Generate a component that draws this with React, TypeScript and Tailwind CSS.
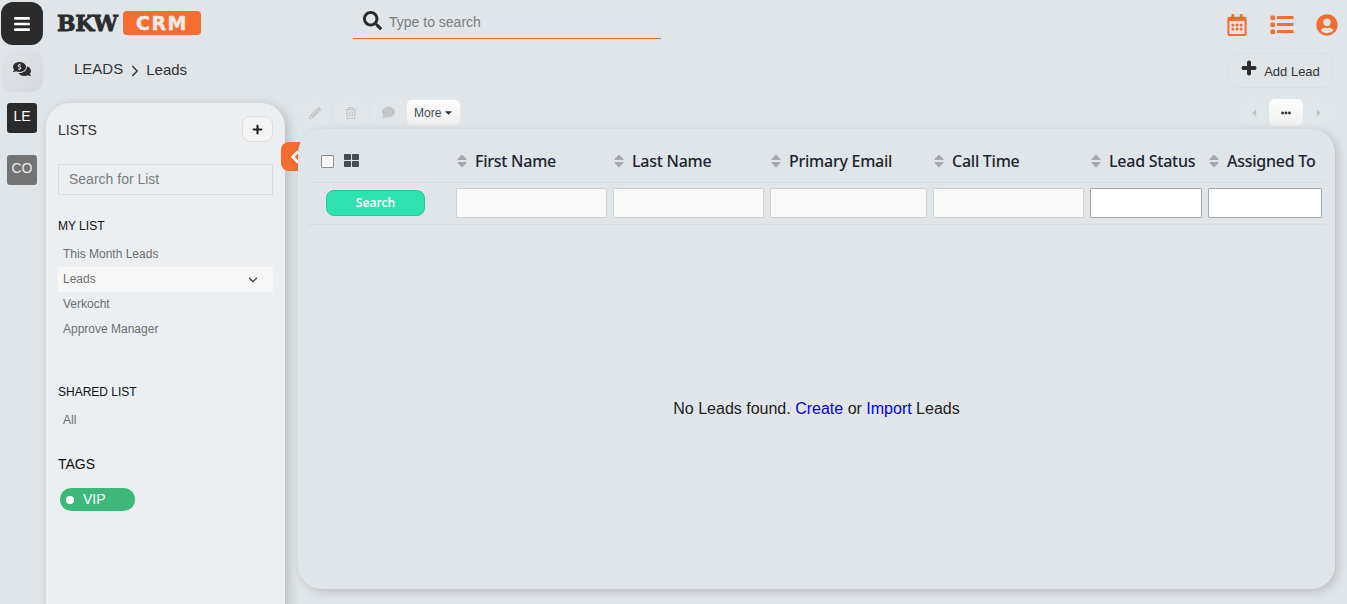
import { FaBars, FaCommentsDollar, FaSearch, FaRegCalendarAlt, FaUserCircle, FaPlus, FaPencilAlt, FaRegTrashAlt, FaComment, FaCaretDown, FaCaretLeft, FaCaretRight, FaEllipsisH, FaThLarge, FaSort, FaChevronLeft } from "react-icons/fa";
import { ChevronDown, ChevronRight } from "lucide-react";

const columns = [
  { label: "First Name", w: "w-[157px]", pad: "pr-[6px]", white: false },
  { label: "Last Name", w: "w-[157px]", pad: "pr-[6px]", white: false },
  { label: "Primary Email", w: "w-[163px]", pad: "pr-[6px]", white: false },
  { label: "Call Time", w: "w-[157px]", pad: "pr-[6px]", white: false },
  { label: "Lead Status", w: "w-[118px]", pad: "pr-[6px]", white: true },
  { label: "Assigned To", w: "w-[117px]", pad: "pr-[3px]", white: true },
];

function ListIcon() {
  return (
    <svg width="24" height="20" viewBox="0 0 24 20" fill="currentColor">
      <rect x="0.5" y="0.5" width="4.5" height="4.5" rx="1" />
      <rect x="0.5" y="7.5" width="4.5" height="4.5" rx="1" />
      <rect x="0.5" y="14.5" width="4.5" height="4.5" rx="1" />
      <rect x="7" y="1" width="16.5" height="3" rx="0.5" />
      <rect x="7" y="8" width="16.5" height="3" rx="0.5" />
      <rect x="7" y="15" width="16.5" height="3" rx="0.5" />
    </svg>
  );
}

function Rail() {
  return (
    <div className="w-[46px] shrink-0 flex flex-col items-center pt-[2px] pr-[2px]">
      <div className="w-[42px] h-[43px] rounded-[12px] bg-[#2b2b2b] flex items-center justify-center text-white text-[18px]"><FaBars /></div>
      <div className="mt-[4px] w-[42px] h-[43px] rounded-[12px] bg-gradient-to-br from-[#e0e4e8] to-[#d5d9dd] flex items-center justify-center text-[#2b2b2b] text-[18px] pb-[3px]"><FaCommentsDollar /></div>
      <div className="mt-[11px] w-[30px] h-[30px] rounded-[3px] bg-[#2b2b2b] text-white text-[14px] flex items-center justify-center pb-[4px]">LE</div>
      <div className="mt-[22px] w-[30px] h-[30px] rounded-[3px] bg-[#737373] text-[#eeeeee] text-[14px] flex items-center justify-center pb-[4px]">CO</div>
    </div>
  );
}

function Header() {
  return (
    <div className="h-[50px] flex items-start shrink-0">
      <div className="w-[307px] pl-[11px] pt-[11px] flex items-center">
        <span className="text-[#2b2b2b] text-[22px] leading-[24px] font-black tracking-[-0.4px] [-webkit-text-stroke:0.8px_#2b2b2b] [font-family:'DejaVu_Serif',serif] w-[62px]">BKW</span>
        <span className="ml-[4px] w-[78px] h-[24px] rounded-[4px] bg-[#f76c2f] text-[#f0e9e4] text-[19px] leading-[24px] font-bold text-center tracking-[1.5px] [-webkit-text-stroke:0.5px_#f0e9e4] [font-family:'DejaVu_Sans',sans-serif]">CRM</span>
      </div>
      <div className="w-[308px] h-[39px] border-b border-[#f76c2f] flex items-center pl-[10px] pt-[5px]">
        <FaSearch className="text-[#2b2b2b] text-[19px] -mt-[2px]" />
        <span className="ml-[7px] mt-[2px] text-[14px] text-[#7d7d7d]">Type to search</span>
      </div>
      <div className="ml-auto flex items-center gap-[22px] pr-[9px] pt-[14px] text-[#f76c2f]">
        <FaRegCalendarAlt className="text-[22px] -mt-[1px]" />
        <ListIcon />
        <FaUserCircle className="text-[22px]" />
      </div>
    </div>
  );
}

function Sidebar() {
  const item = "h-[25px] pl-[5px] pb-[2px] flex items-center text-[12px] text-[#6e6e6e]";
  return (
    <div className="w-[239px] shrink-0 self-stretch rounded-t-[24px] bg-[#ebeff2] shadow-[3px_3px_12px_rgba(0,0,0,0.2)] px-[12px] pt-[13px] h-[520px]">
      <div className="flex items-center justify-between h-[26px]">
        <span className="text-[14px] text-[#333333] mt-[2px]">LISTS</span>
        <div className="w-[31px] h-[26px] rounded-[8px] border border-[#dddddd] bg-[#f4f4f4] flex items-center justify-center text-[#222222] text-[11px]"><FaPlus /></div>
      </div>
      <div className="mt-[22px] h-[31px] border border-[#dcdcdc] flex items-center pl-[10px] text-[14px] text-[#7d7d7d]">Search for List</div>
      <div className="mt-[23px] text-[12px] leading-[16px] text-[#111111]">MY LIST</div>
      <div className="mt-[8px]">
        <div className={item}>This Month Leads</div>
        <div className={`${item} bg-[#f6f6f6] justify-between pr-[13px]`}>Leads<ChevronDown size={14} strokeWidth={2} className="text-[#333333] mt-[3px]" /></div>
        <div className={item}>Verkocht</div>
        <div className={item}>Approve Manager</div>
      </div>
      <div className="mt-[42px] text-[12px] leading-[16px] text-[#111111]">SHARED LIST</div>
      <div className="mt-[8px]"><div className={item}>All</div></div>
      <div className="mt-[22px] text-[14px] leading-[18px] text-[#111111]">TAGS</div>
      <div className="mt-[15px] ml-[2px] w-[75px] h-[23px] rounded-full bg-[#3cb878] flex items-center pl-[6px] text-white text-[14px] leading-[20px]">
        <span className="w-[8px] h-[8px] rounded-full bg-white mt-[1px]" />
        <span className="ml-[9px] mb-[2px]">VIP</span>
      </div>
    </div>
  );
}

function Toolbar() {
  const ghost = "h-[27px] rounded-[6px] bg-[#e1e6ea] shadow-[0_0_1px_rgba(0,0,0,0.06)] flex items-center justify-center text-[#c4c6c8] text-[12px]";
  return (
    <div className="h-[30px] flex items-start pl-[1px] shrink-0">
      <div className={`${ghost} w-[32px]`}><FaPencilAlt /></div>
      <div className={`${ghost} w-[34px] ml-[3px]`}><FaRegTrashAlt /></div>
      <div className={`${ghost} w-[36px] ml-[2px] text-[13px]`}><FaComment /></div>
      <div className="w-[55px] h-[27px] rounded-[6px] border border-[#e8e8e8] bg-gradient-to-b from-[#ffffff] to-[#eeeeee] flex items-center pl-[7px] text-[12px] text-[#3f4a56]">More<FaCaretDown className="ml-[2px] text-[#333333] text-[11px]" /></div>
      <div className="ml-auto mr-[2px] flex items-center">
        <div className={`${ghost} w-[29px] text-[11px] text-[#b5b7b9]`}><FaCaretLeft /></div>
        <div className="mx-[1px] w-[34px] h-[27px] rounded-[6px] bg-gradient-to-b from-[#ffffff] to-[#eeeeee] flex items-center justify-center text-[#333333] text-[10px]"><FaEllipsisH /></div>
        <div className={`${ghost} w-[29px] text-[11px] text-[#b5b7b9]`}><FaCaretRight /></div>
      </div>
    </div>
  );
}

function Card() {
  return (
    <div className="relative z-10 h-[460px] w-[1037px] rounded-[24px] bg-[#e0e5e9] shadow-[3px_3px_10px_rgba(0,0,0,0.16)] px-[10px]">
      <div className="h-[54px] flex items-center border-b border-[#d9dcdf] pt-[11px]">
        <div className="w-[148px] pl-[13px] flex items-center gap-[10px]">
          <span className="w-[13px] h-[13px] border border-[#8f8f8f] rounded-[1px] bg-[#f7f7f7]" />
          <FaThLarge className="text-[#444c55] text-[15px] mb-[1px]" />
        </div>
        {columns.map((c) => (
          <div key={c.label} className={`${c.w} flex items-center gap-[5px] text-[16px] leading-[20px] font-medium tracking-[-0.25px] text-[#1c2530] [font-family:'Noto_Sans',sans-serif] whitespace-nowrap`}>
            <FaSort className="text-[#a5a9ad] text-[16px] shrink-0 -ml-[2px]" />
            {c.label}
          </div>
        ))}
      </div>
      <div className="h-[42px] pb-[1px] flex items-center border-b border-[#d9dcdf]">
        <div className="w-[148px] pl-[18px]">
          <div className="w-[99px] h-[26px] rounded-[8px] bg-[#2ee2b0] border border-[#27c99c] flex items-center justify-center text-white text-[12px] font-semibold [font-family:'Noto_Sans',sans-serif]">Search</div>
        </div>
        {columns.map((c) => (
          <div key={c.label} className={`${c.w} ${c.pad}`}>
            <div className={`h-[30px] w-full rounded-[1px] border ${c.white ? "bg-white border-[#a9a9a9]" : "bg-[#f8f8f8] border-[#cfcfcf]"}`} />
          </div>
        ))}
      </div>
      <div className="h-[364px] flex items-center justify-center text-[16px] text-[#222222] pt-[3px]">
        <span>No Leads found. <span className="text-[#0000ee]">Create</span> or <span className="text-[#0000ee]">Import</span> Leads</span>
      </div>
    </div>
  );
}

export default function App() {
  return (
    <div className="h-[604px] overflow-hidden bg-[#e0e5e9] flex [font-family:'Liberation_Sans',sans-serif]">
      <Rail />
      <div className="flex-1 min-w-0 flex flex-col">
        <Header />
        <div className="h-[53px] shrink-0 flex items-start justify-between pr-[14px]">
          <div className="pl-[28px] pt-[9px] flex items-center text-[15px] leading-[20px] text-[#333333]">
            <span className="-mt-[2px]">LEADS</span>
            <ChevronRight size={18} strokeWidth={1.8} className="ml-[3px] mr-[2px] mt-[3px]" />
            <span>Leads</span>
          </div>
          <div className="mt-[3px] w-[105px] h-[35px] rounded-[10px] border border-[#dbdfe3] flex items-center justify-center text-[13px] text-[#333333]">
            <FaPlus className="text-[#2b2b2b] text-[16px] mr-[7px] -mt-[5px] [stroke-width:30px] stroke-[#2b2b2b]" />
            <span className="mt-[3px]">Add Lead</span>
          </div>
        </div>
        <div className="flex-1 min-h-0 flex relative">
          <Sidebar />
          <div className="absolute left-[235px] top-[39px] w-[22px] h-[29px] rounded-l-[8px] bg-[#f76c2f] flex items-center pl-[7px] text-white text-[14px] z-0"><FaChevronLeft className="[stroke-width:30px] stroke-white" /></div>
          <div className="ml-[13px] -mt-[4px]">
            <Toolbar />
            <Card />
          </div>
        </div>
      </div>
    </div>
  );
}
